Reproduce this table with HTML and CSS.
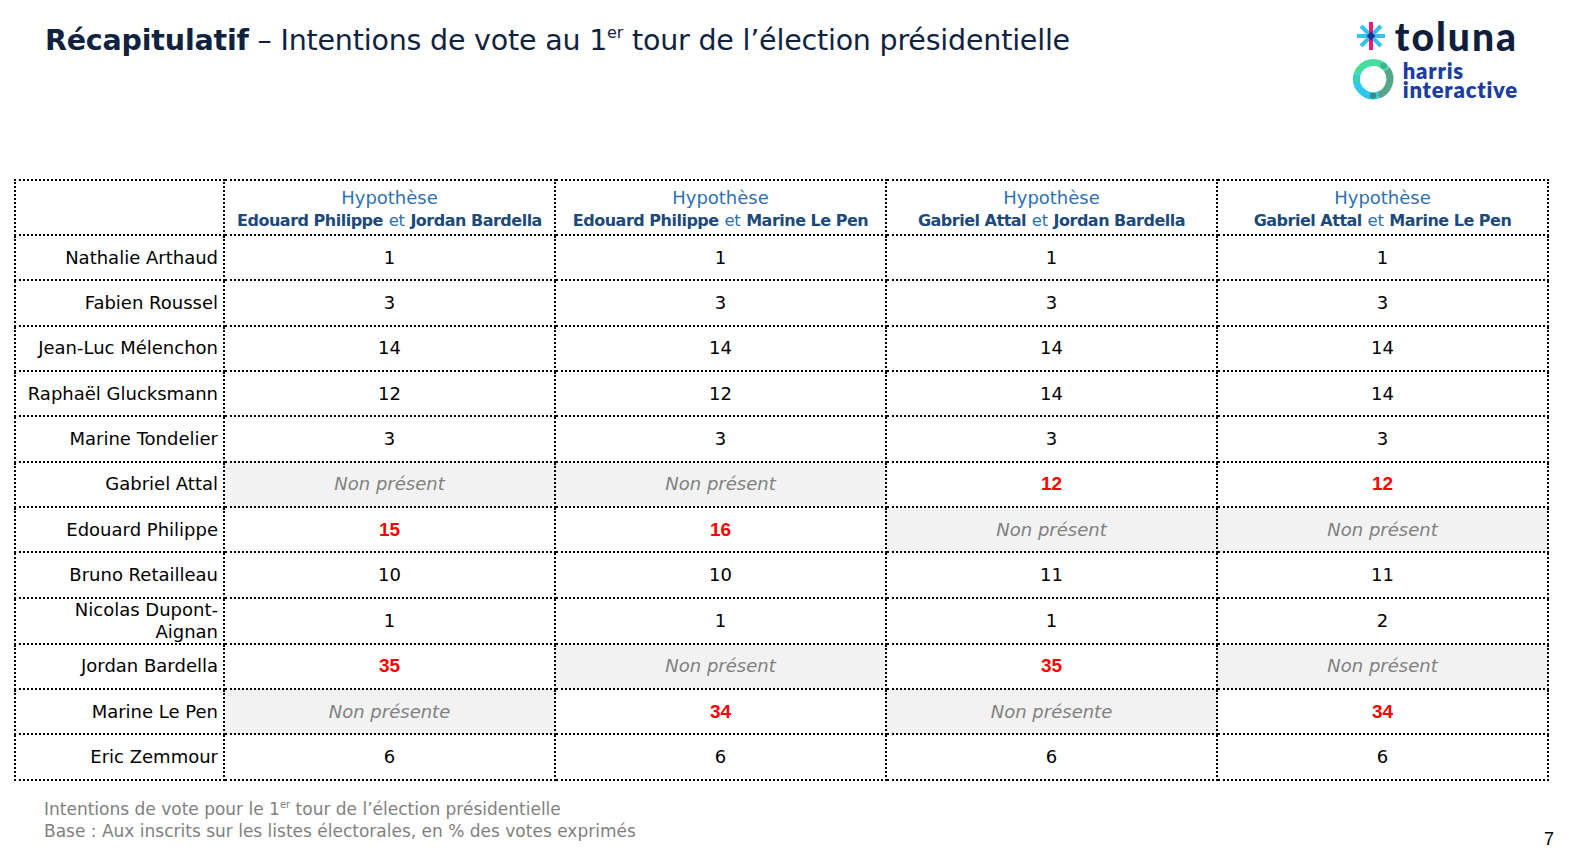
FILE: index.html
```html
<!DOCTYPE html>
<html lang="fr">
<head>
<meta charset="utf-8">
<title>Récapitulatif</title>
<link rel="stylesheet" href="styles.css">
</head>
<body>
<div class="page">
  <header class="top">
    <h1 class="title"><b>Récapitulatif</b> – Intentions de vote au 1<sup>er</sup> tour de l’élection présidentielle</h1>
    <div class="logo">
      <div class="logo-row toluna-row">
        <svg class="star" width="30" height="30" viewBox="0 0 30 30">
          <g stroke-width="4" stroke-linecap="butt">
            <line x1="1" y1="15" x2="29" y2="15" stroke="#34c3ef"/>
            <line x1="5" y1="5" x2="25" y2="25" stroke="#34c3ef"/>
            <line x1="25" y1="5" x2="5" y2="25" stroke="#34c3ef"/>
            <line x1="15" y1="1" x2="15" y2="29" stroke="#e8197c"/>
          </g>
          <rect x="12" y="12" width="6" height="6" fill="#1b2f8f" transform="rotate(45 15 15)"/>
        </svg>
        <span class="toluna">toluna</span>
      </div>
      <div class="logo-row harris-row">
        <svg class="ring" width="44" height="44" viewBox="0 0 44 44">
          <g fill="none" stroke-width="7">
            <path d="M 6.2 17 A 17 17 0 0 1 36 12.5" stroke="#45de9f"/>
            <path d="M 36 12.5 A 17 17 0 0 1 27 38.2" stroke="#55a48c"/>
            <path d="M 27 38.2 A 17 17 0 0 1 6.2 17" stroke="#2ec7ee"/>
          </g>
          <circle cx="32.5" cy="8.7" r="3.2" fill="#3fb38f"/>
          <circle cx="5.4" cy="22" r="3.2" fill="#3cd3a8"/>
          <circle cx="22" cy="38.6" r="3.2" fill="#2f8f8a"/>
        </svg>
        <span class="harris"><span class="hline">harris</span><span class="hline">interactive</span></span>
      </div>
    </div>
  </header>

  <table class="recap">
    <colgroup>
      <col class="c-name"><col class="c-val"><col class="c-val"><col class="c-val"><col class="c-val">
    </colgroup>
    <thead>
      <tr>
        <th></th>
        <th><span class="hyp">Hypothèse</span><br><b>Edouard Philippe</b> <span class="et">et</span> <b>Jordan Bardella</b></th>
        <th><span class="hyp">Hypothèse</span><br><b>Edouard Philippe</b> <span class="et">et</span> <b>Marine Le Pen</b></th>
        <th><span class="hyp">Hypothèse</span><br><b>Gabriel Attal</b> <span class="et">et</span> <b>Jordan Bardella</b></th>
        <th><span class="hyp">Hypothèse</span><br><b>Gabriel Attal</b> <span class="et">et</span> <b>Marine Le Pen</b></th>
      </tr>
    </thead>
    <tbody>
      <tr><td class="name">Nathalie Arthaud</td><td>1</td><td>1</td><td>1</td><td>1</td></tr>
      <tr><td class="name">Fabien Roussel</td><td>3</td><td>3</td><td>3</td><td>3</td></tr>
      <tr><td class="name">Jean-Luc Mélenchon</td><td>14</td><td>14</td><td>14</td><td>14</td></tr>
      <tr><td class="name">Raphaël Glucksmann</td><td>12</td><td>12</td><td>14</td><td>14</td></tr>
      <tr><td class="name">Marine Tondelier</td><td>3</td><td>3</td><td>3</td><td>3</td></tr>
      <tr><td class="name">Gabriel Attal</td><td class="absent">Non présent</td><td class="absent">Non présent</td><td class="hl">12</td><td class="hl">12</td></tr>
      <tr><td class="name">Edouard Philippe</td><td class="hl">15</td><td class="hl">16</td><td class="absent">Non présent</td><td class="absent">Non présent</td></tr>
      <tr><td class="name">Bruno Retailleau</td><td>10</td><td>10</td><td>11</td><td>11</td></tr>
      <tr><td class="name">Nicolas Dupont-Aignan</td><td>1</td><td>1</td><td>1</td><td>2</td></tr>
      <tr><td class="name">Jordan Bardella</td><td class="hl">35</td><td class="absent">Non présent</td><td class="hl">35</td><td class="absent">Non présent</td></tr>
      <tr><td class="name">Marine Le Pen</td><td class="absent">Non présente</td><td class="hl">34</td><td class="absent">Non présente</td><td class="hl">34</td></tr>
      <tr><td class="name">Eric Zemmour</td><td>6</td><td>6</td><td>6</td><td>6</td></tr>
    </tbody>
  </table>

  <footer class="bottom">
    <p class="notes">Intentions de vote pour le 1<sup>er</sup> tour de l’élection présidentielle<br>Base : Aux inscrits sur les listes électorales, en % des votes exprimés</p>
    <span class="pagenum">7</span>
  </footer>
</div>
</body>
</html>
```

FILE: styles.css
```css
* { box-sizing: border-box; }
html, body { margin: 0; padding: 0; background: #fff; }
body { font-family: "DejaVu Sans", "Liberation Sans", sans-serif; color: #000; }

.page { width: 1574px; height: 866px; overflow: hidden; }

.top {
  height: 179px;
  display: flex;
  justify-content: space-between;
  align-items: flex-start;
  padding: 0 58px 0 45px;
}

.title {
  margin: 23px 0 0 0;
  font-size: 28.5px;
  letter-spacing: -0.2px;
  line-height: 36px;
  font-weight: normal;
  color: #0f2340;
  white-space: nowrap;
}
.title b { font-weight: bold; }
.title sup { font-size: 16px; vertical-align: 12px; line-height: 0; }

.logo {
  margin-top: 19px;
  display: flex;
  flex-direction: column;
  align-items: flex-end;
}
.logo-row { display: flex; align-items: center; }
.toluna-row { gap: 9px; height: 34px; }
.toluna {
  font-family: Lato, sans-serif;
  font-weight: 900;
  font-size: 39px;
  line-height: 34px;
  color: #0f1e3c;
  letter-spacing: 2px;
  margin-right: -2px;
}
.harris-row { gap: 8px; margin-top: 4px; margin-right: -2px; }
.harris {
  display: flex;
  flex-direction: column;
  font-family: Lato, sans-serif;
  font-weight: 800;
  font-size: 22px;
  letter-spacing: 0.8px;
  color: #1b3d9f;
  padding-top: 1px;
}
.hline { display: block; line-height: 19px; height: 19px; }

.recap {
  margin-left: 14px;
  width: 1532px;
  table-layout: fixed;
  border-collapse: collapse;
  border: 2px dotted #000;
}
.c-name { width: 209px; }
.c-val { width: 331px; }

.recap th, .recap td {
  border: 2px dotted #000;
  padding: 0;
  text-align: center;
  vertical-align: middle;
  font-size: 18px;
  line-height: 22px;
  font-weight: normal;
}
.recap thead tr { height: 55px; }
.recap tbody tr { height: 45.33px; }

.recap th { color: #2e71b0; padding-top: 3px; }
.recap th .hyp { color: #2e71b0; }
.recap th b { color: #1c4a7a; font-weight: bold; font-size: 16px; letter-spacing: -0.5px; }
.recap th .et { color: #2e71b0; font-size: 16.5px; letter-spacing: -0.3px; }

.recap td.name { text-align: right; padding-right: 5px; padding-left: 4px; }

.recap td.hl {
  color: #ff0000;
  font-family: "Liberation Sans", Arial, sans-serif;
  font-weight: bold;
  font-size: 19px;
}

.recap td.absent {
  background: #f2f2f2;
  color: #808080;
  font-style: italic;
}

.bottom {
  display: flex;
  justify-content: space-between;
  align-items: flex-end;
  padding: 0 20px 0 44px;
}
.notes {
  margin: 17px 0 0 0;
  font-size: 17px;
  line-height: 22px;
  color: #808080;
}
.notes sup { font-size: 10px; vertical-align: 7px; line-height: 0; }
.pagenum {
  font-family: "Liberation Sans", Arial, sans-serif;
  font-size: 18px;
  line-height: 18px;
  color: #000;
  margin-bottom: -6px;
}
```
